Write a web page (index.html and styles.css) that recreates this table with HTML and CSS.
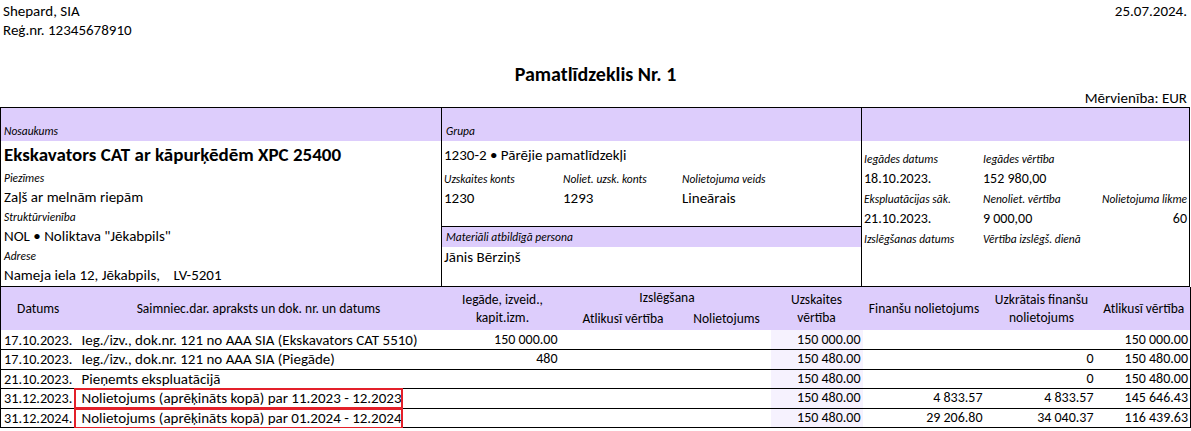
FILE: index.html
```html
<!DOCTYPE html>
<html lang="lv">
<head>
<meta charset="utf-8">
<title>Pamatlīdzeklis Nr. 1</title>
<link rel="stylesheet" href="styles.css">
</head>
<body>
<div class="page">
  <header class="top">
    <div class="company">
      <div>Shepard, SIA</div>
      <div>Reģ.nr. 12345678910</div>
    </div>
    <div class="date">25.07.2024.</div>
  </header>
  <h1 class="title">Pamatlīdzeklis Nr. 1</h1>
  <div class="unit">Mērvienība: EUR</div>

  <section class="info">
    <div class="col col-left">
      <div class="band"><span class="lbl band-lbl">Nosaukums</span></div>
      <div class="name">Ekskavators CAT ar kāpurķēdēm XPC 25400</div>
      <div class="lbl">Piezīmes</div>
      <div class="val">Zaļš ar melnām riepām</div>
      <div class="lbl">Struktūrvienība</div>
      <div class="val">NOL • Noliktava "Jēkabpils"</div>
      <div class="lbl">Adrese</div>
      <div class="val">Nameja iela 12, Jēkabpils,&nbsp;&nbsp;&nbsp;&nbsp;LV-5201</div>
    </div>

    <div class="col col-mid">
      <div class="mid-top">
        <div class="band"><span class="lbl band-lbl">Grupa</span></div>
        <div class="val group-line">1230-2 • Pārējie pamatlīdzekļi</div>
        <div class="triple">
          <div class="field"><div class="lbl">Uzskaites konts</div><div class="val">1230</div></div>
          <div class="field"><div class="lbl">Noliet. uzsk. konts</div><div class="val">1293</div></div>
          <div class="field"><div class="lbl">Nolietojuma veids</div><div class="val">Lineārais</div></div>
        </div>
      </div>
      <div class="band band-small"><span class="lbl band-lbl">Materiāli atbildīgā persona</span></div>
      <div class="val">Jānis Bērziņš</div>
    </div>

    <div class="col col-right">
      <div class="band"></div>
      <div class="rgrid">
        <div class="lbl">Iegādes datums</div>
        <div class="lbl">Iegādes vērtība</div>
        <div class="lbl"></div>
        <div class="val">18.10.2023.</div>
        <div class="val">152 980,00</div>
        <div class="val"></div>
        <div class="lbl">Ekspluatācijas sāk.</div>
        <div class="lbl">Nenoliet. vērtība</div>
        <div class="lbl right">Nolietojuma likme</div>
        <div class="val">21.10.2023.</div>
        <div class="val">9 000,00</div>
        <div class="val right">60</div>
        <div class="lbl">Izslēgšanas datums</div>
        <div class="lbl">Vērtība izslēgš. dienā</div>
        <div class="lbl"></div>
      </div>
    </div>
  </section>

  <table class="ledger">
    <colgroup>
      <col class="w-date">
      <col class="w-desc">
      <col class="w-acq">
      <col class="w-rem">
      <col class="w-dep">
      <col class="w-book">
      <col class="w-fin">
      <col class="w-acc">
      <col class="w-left">
    </colgroup>
    <thead>
      <tr class="h1">
        <th rowspan="2">Datums</th>
        <th rowspan="2">Saimniec.dar. apraksts un dok. nr. un datums</th>
        <th rowspan="2">Iegāde, izveid.,<br>kapit.izm.</th>
        <th colspan="2">Izslēgšana</th>
        <th rowspan="2">Uzskaites<br>vērtība</th>
        <th rowspan="2">Finanšu nolietojums</th>
        <th rowspan="2">Uzkrātais finanšu<br>nolietojums</th>
        <th rowspan="2">Atlikusī vērtība</th>
      </tr>
      <tr class="h2">
        <th>Atlikusī vērtība</th>
        <th>Nolietojums</th>
      </tr>
    </thead>
    <tbody>
      <tr>
        <td class="d">17.10.2023.</td>
        <td class="desc">Ieg./izv., dok.nr. 121 no AAA SIA (Ekskavators CAT 5510)</td>
        <td class="n acq">150 000.00</td>
        <td></td><td></td>
        <td class="n book">150 000.00</td>
        <td class="n fin"></td>
        <td class="n acc"></td>
        <td class="n left">150 000.00</td>
      </tr>
      <tr>
        <td class="d">17.10.2023.</td>
        <td class="desc">Ieg./izv., dok.nr. 121 no AAA SIA (Piegāde)</td>
        <td class="n acq">480</td>
        <td></td><td></td>
        <td class="n book">150 480.00</td>
        <td class="n fin"></td>
        <td class="n acc">0</td>
        <td class="n left">150 480.00</td>
      </tr>
      <tr>
        <td class="d">21.10.2023.</td>
        <td class="desc">Pieņemts ekspluatācijā</td>
        <td class="n acq"></td>
        <td></td><td></td>
        <td class="n book">150 480.00</td>
        <td class="n fin"></td>
        <td class="n acc">0</td>
        <td class="n left">150 480.00</td>
      </tr>
      <tr>
        <td class="d">31.12.2023.</td>
        <td class="desc"><span class="hl"></span>Nolietojums (aprēķināts kopā) par 11.2023 - 12.2023</td>
        <td class="n acq"></td>
        <td></td><td></td>
        <td class="n book">150 480.00</td>
        <td class="n fin">4 833.57</td>
        <td class="n acc">4 833.57</td>
        <td class="n left">145 646.43</td>
      </tr>
      <tr>
        <td class="d">31.12.2024.</td>
        <td class="desc"><span class="hl"></span>Nolietojums (aprēķināts kopā) par 01.2024 - 12.2024</td>
        <td class="n acq"></td>
        <td></td><td></td>
        <td class="n book">150 480.00</td>
        <td class="n fin">29 206.80</td>
        <td class="n acc">34 040.37</td>
        <td class="n left">116 439.63</td>
      </tr>
    </tbody>
  </table>
</div>
</body>
</html>
```

FILE: styles.css
```css
* { box-sizing: border-box; }

body {
  margin: 0;
  font-family: Carlito, Calibri, Lato, "Liberation Sans", sans-serif;
  color: #000;
  background: #fff;
}

.page {
  width: 1191px;
}

.top {
  display: flex;
  justify-content: space-between;
  padding: 2px 4px 0 3px;
  font-size: 15px;
  line-height: 19px;
}

.title {
  margin: 22px 0 0;
  text-align: center;
  font-size: 20px;
  line-height: 24px;
  font-weight: bold;
}

.unit {
  text-align: right;
  padding: 3px 4px 0 0;
  font-size: 15px;
  line-height: 18px;
}

/* info block */
.info {
  display: grid;
  grid-template-columns: 441px 420px 327px;
  width: 1190px;
  height: 180px;
  border: 1px solid #000;
}

.col-left,
.col-mid {
  border-right: 1px solid #000;
}

.band {
  background: #ddcdfc;
  height: 33px;
  display: flex;
  align-items: flex-end;
}

.band-small {
  height: 20px;
}

.band-lbl {
  line-height: 13px;
  padding-bottom: 1px;
}

.lbl {
  font-style: italic;
  font-size: 11.5px;
  line-height: 18px;
  white-space: nowrap;
}

.val {
  font-size: 15px;
  line-height: 20px;
  white-space: nowrap;
}

.col-left .val {
  line-height: 21px;
}

.name {
  font-size: 19px;
  font-weight: bold;
  line-height: 28px;
  white-space: nowrap;
}

.col-left > * {
  padding-left: 3px;
}

.col-mid .band,
.col-mid .val,
.col-mid .lbl {
  padding-left: 2px;
}

.mid-top {
  height: 119px;
  border-bottom: 1px solid #000;
}

.group-line {
  line-height: 29px;
}

.triple {
  display: grid;
  grid-template-columns: 119px 119px 1fr;
}

.rgrid {
  display: grid;
  grid-template-columns: 119px 119px 1fr;
  padding: 9px 2px 0 2px;
}

.rgrid .val {
  font-size: 14px;
  line-height: 22px;
}

.right {
  text-align: right;
}

/* ledger table */
.ledger {
  width: 1190px;
  border-collapse: collapse;
  table-layout: fixed;
  border-left: 1px solid #000;
  border-right: 1px solid #000;
}

.w-date { width: 75px; }
.w-desc { width: 366px; }
.w-acq  { width: 122px; }
.w-rem  { width: 119px; }
.w-dep  { width: 88px; }
.w-book { width: 92px; }
.w-fin  { width: 123px; }
.w-acc  { width: 112px; }
.w-left { width: 93px; }

.ledger th {
  background: #ddcdfc;
  font-weight: normal;
  font-size: 13.5px;
  line-height: 18px;
  padding: 0;
  text-align: center;
  vertical-align: middle;
  white-space: nowrap;
}

.ledger .h1 { height: 21px; }
.ledger .h2 { height: 22px; }

.ledger tbody tr {
  border-bottom: 1px solid #000;
}

.ledger td {
  font-size: 15px;
  line-height: 18px;
  height: 19.5px;
  padding: 0;
  white-space: nowrap;
  vertical-align: middle;
}

.ledger .d {
  padding-left: 3px;
  font-size: 14.2px;
}

.ledger .desc {
  position: relative;
  padding-left: 6px;
}

.ledger .n {
  text-align: right;
  font-size: 14px;
}
.ledger .acq  { padding-right: 6px; }
.ledger .book { padding-right: 2px; background: #f6f2fe; }
.ledger .fin  { padding-right: 3px; }
.ledger .acc  { padding-right: 4px; }
.ledger .left { padding-right: 2px; }

.hl {
  position: absolute;
  left: -2px;
  top: -1px;
  width: 329px;
  height: 21px;
  border: 2px solid #e3202a;
}
```
